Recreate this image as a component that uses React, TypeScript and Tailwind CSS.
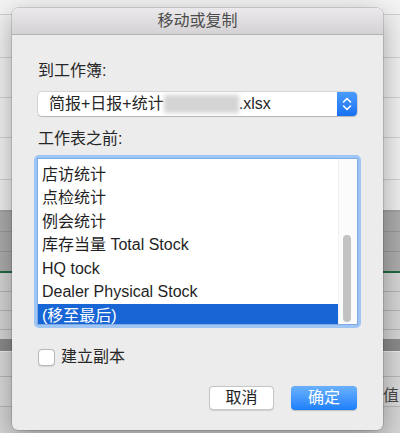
import React from 'react';

const sheets = ['日报统计', '店访统计', '点检统计', '例会统计', '库存当量 Total Stock', 'HQ tock', 'Dealer Physical Stock', '(移至最后)'];

function SheetBackground() {
  return (
    <div className="flex flex-col w-full">
      <div className="h-[15px] bg-[#f4f4f4] border-b border-[#d0d0d0]" />
      <div className="h-[43px] bg-[#f2f2f2] border-b border-[#d2d2d2]" />
      <div className="h-[40px] bg-[#f2f2f2] border-b border-[#d2d2d2]" />
      <div className="h-[40px] bg-[#f2f2f2] border-b border-[#d2d2d2]" />
      <div className="h-[42px] bg-[#f2f2f2] border-b border-[#d2d2d2]" />
      <div className="h-[30px] bg-[#f0f0f0]" />
      <div className="h-[2px] bg-[#a2a2a2]" />
      <div className="h-[20px] bg-[#adadad] border-b border-[#9a9a9a]" />
      <div className="h-[20px] bg-[#adadad] border-b border-[#9a9a9a]" />
      <div className="h-[19px] bg-[#adadad]" />
      <div className="h-[2px] bg-[#1f6b40]" />
      <div className="h-[19px] bg-[#d6d6d6] border-b border-[#b4b4b4]" />
      <div className="h-[19px] bg-[#d6d6d6] border-b border-[#b4b4b4]" />
      <div className="h-[19px] bg-[#d6d6d6] border-b border-[#b4b4b4]" />
      <div className="h-[9px] bg-[#d6d6d6]" />
      <div className="h-[12px] bg-[#8b8b8b]" />
      <div className="h-[26px] bg-[#dadada] border-t border-[#eeeeee] border-b border-b-[#b8b8b8]" />
      <div className="h-[30px] bg-[#dadada] border-b border-[#b8b8b8] flex items-end justify-end pr-[1px]">
        <span className="text-[16px] leading-[20px] text-[#4a4a4a]">值</span>
      </div>
      <div className="h-[26px] bg-[#d6d6d6]" />
    </div>
  );
}

function Stepper() {
  return (
    <div className="w-[20px] h-full rounded-r-[4px] bg-gradient-to-b from-[#4a9cfc] to-[#1670f2] flex items-center justify-center">
      <svg width="20" height="24" viewBox="0 0 20 24" fill="none">
        <path d="M6.5 10 L10 6.5 L13.5 10" stroke="white" strokeWidth="1.6" strokeLinecap="round" strokeLinejoin="round" />
        <path d="M6.5 14 L10 17.5 L13.5 14" stroke="white" strokeWidth="1.6" strokeLinecap="round" strokeLinejoin="round" />
      </svg>
    </div>
  );
}

export default function App() {
  return (
    <div
      className="relative w-[400px] h-[433px] overflow-hidden bg-[#f2f2f2]"
      style={{ fontFamily: '"Liberation Sans", "Noto Sans CJK SC", sans-serif' }}
    >
      <SheetBackground />

      <div className="absolute left-[12px] top-[8px] w-[371px] h-[422px] rounded-[6px] bg-[#ececec] shadow-[0_0_0_0.5px_rgba(0,0,0,0.25),0_8px_28px_rgba(0,0,0,0.35)] flex flex-col">
        <div className="h-[27px] rounded-t-[6px] bg-gradient-to-b from-[#ebe9eb] to-[#d4d2d4] border-b border-[#b3b3b3] flex items-center justify-center">
          <span className="text-[16px] leading-[20px] text-[#4b4b4b]">移动或复制</span>
        </div>

        <div className="flex flex-col px-[26px] text-[16px] text-[#262626]">
          <div className="mt-[26px] leading-[20px]">到工作簿:</div>

          <div className="mt-[11px] h-[24px] flex bg-white rounded-[4px] shadow-[0_0_0_0.5px_rgba(0,0,0,0.2),0_1px_1px_rgba(0,0,0,0.15)]">
            <div className="flex-1 flex items-center pl-[11px] leading-[20px]">
              <span>简报+日报+统计</span>
              <span className="inline-block w-[75px] h-[18px] bg-[#d4d4d4] blur-[2px]" />
              <span>.xlsx</span>
            </div>
            <Stepper />
          </div>

          <div className="mt-[13px] leading-[20px]">工作表之前:</div>

          <div className="mt-[6px] -mx-[4px] h-[173px] rounded-[5px] border-[3px] border-[#9fc5f5] flex flex-col">
            <div className="flex-1 flex bg-white border border-[#7faae2] overflow-hidden">
              <div className="flex-1 flex flex-col overflow-hidden">
                <div className="-mt-[19.5px] flex flex-col">
                  {sheets.map((s, i) => (
                    <div
                      key={s}
                      className={
                        i === sheets.length - 1
                          ? 'h-[23.5px] shrink-0 flex items-center pl-[4px] bg-[#1865d6] text-white'
                          : 'h-[23.5px] shrink-0 flex items-center pl-[4px] text-[#1f1f1f]'
                      }
                    >
                      {s}
                    </div>
                  ))}
                </div>
              </div>
              <div className="w-[19px] border-l border-[#f1f1f1] bg-[#fbfbfb] flex flex-col pt-[76px] pl-[4px]">
                <div className="w-[8px] h-[87px] rounded-full bg-[#c2c2c2]" />
              </div>
            </div>
          </div>

          <div className="mt-[19px] flex items-center gap-[6px]">
            <div className="w-[17px] h-[17px] rounded-[4px] bg-white border border-[#b8b8b8] shadow-[0_0.5px_1px_rgba(0,0,0,0.1)]" />
            <span className="leading-[20px]">建立副本</span>
          </div>

          <div className="mt-[19px] flex justify-end gap-[17px]">
            <button className="w-[65px] h-[24px] rounded-[4px] bg-white border border-[#c6c6c6] shadow-[0_0.5px_1px_rgba(0,0,0,0.12)] text-[16px] leading-[20px] text-[#222]">
              取消
            </button>
            <button className="w-[66px] h-[24px] rounded-[4px] bg-gradient-to-b from-[#69b1fb] to-[#1b7ffb] text-[16px] leading-[20px] text-white shadow-[0_0.5px_1px_rgba(0,0,0,0.2)]">
              确定
            </button>
          </div>
        </div>
      </div>
    </div>
  );
}
